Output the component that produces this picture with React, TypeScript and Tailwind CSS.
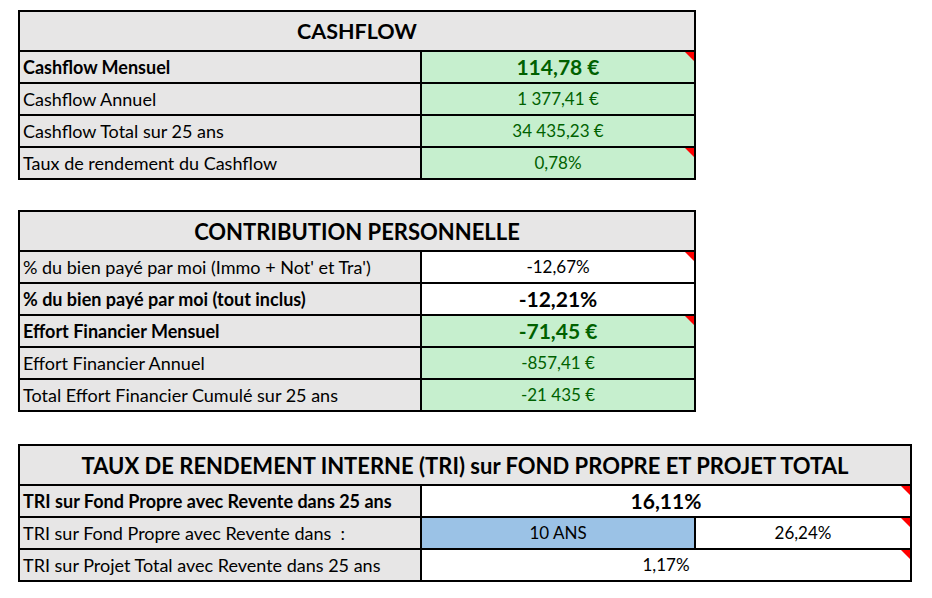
import React from 'react'

type Cell = {
  text: string
  bg?: 'green' | 'white' | 'blue'
  bold?: boolean
  note?: boolean
  width?: string
}

type Row = {
  label: string
  bold?: boolean
  cells: Cell[]
}

const bgClass = {
  green: 'bg-[#c6efce] text-[#006100]',
  white: 'bg-white text-black',
  blue: 'bg-[#9bc2e6] text-black',
}

function Note() {
  return <span className="absolute right-0 top-0 size-[9px] bg-[#ff0000] [clip-path:polygon(0_0,100%_0,100%_100%)]" />
}

function Table({ title, rows, titleSize, width }: { title: string; rows: Row[]; titleSize: string; width: string }) {
  return (
    <div className={`border-2 border-black ${width}`}>
      <div className={`flex h-[40px] items-center justify-center border-b-2 border-black bg-[#e7e6e6] font-bold ${titleSize}`}>
        {title}
      </div>
      {rows.map((row, i) => {
        const last = i === rows.length - 1
        return (
          <div key={i} className={`flex ${last ? 'h-[30px]' : 'h-[32px] border-b-2 border-black'}`}>
            <div className={`flex w-[402px] shrink-0 items-center whitespace-pre border-r-2 border-black bg-[#e7e6e6] pl-[3px] text-[18px] ${row.bold ? 'font-bold' : ''}`}>
              {row.label}
            </div>
            {row.cells.map((cell, j) => (
              <div
                key={j}
                className={`relative flex items-center justify-center ${cell.width ?? 'flex-1'} ${bgClass[cell.bg ?? 'white']} ${
                  cell.bold ? 'text-[21px] font-bold' : 'text-[17px]'
                } ${j < row.cells.length - 1 ? 'border-r-2 border-black' : ''}`}
              >
                {cell.text}
                {cell.note && <Note />}
              </div>
            ))}
          </div>
        )
      })}
    </div>
  )
}

const cashflow: Row[] = [
  { label: 'Cashflow Mensuel', bold: true, cells: [{ text: '114,78 €', bg: 'green', bold: true, note: true }] },
  { label: 'Cashflow Annuel', cells: [{ text: '1 377,41 €', bg: 'green' }] },
  { label: 'Cashflow Total sur 25 ans', cells: [{ text: '34 435,23 €', bg: 'green' }] },
  { label: 'Taux de rendement du Cashflow', cells: [{ text: '0,78%', bg: 'green', note: true }] },
]

const contribution: Row[] = [
  { label: "% du bien payé par moi (Immo + Not' et Tra')", cells: [{ text: '-12,67%', note: true }] },
  { label: '% du bien payé par moi (tout inclus)', bold: true, cells: [{ text: '-12,21%', bold: true }] },
  { label: 'Effort Financier Mensuel', bold: true, cells: [{ text: '-71,45 €', bg: 'green', bold: true, note: true }] },
  { label: 'Effort Financier Annuel', cells: [{ text: '-857,41 €', bg: 'green' }] },
  { label: 'Total Effort Financier Cumulé sur 25 ans', cells: [{ text: '-21 435 €', bg: 'green' }] },
]

const tri: Row[] = [
  { label: 'TRI sur Fond Propre avec Revente dans 25 ans', bold: true, cells: [{ text: '16,11%', bold: true, note: true }] },
  {
    label: 'TRI sur Fond Propre avec Revente dans  :',
    cells: [
      { text: '10 ANS', bg: 'blue', width: 'w-[274px]' },
      { text: '26,24%', note: true },
    ],
  },
  { label: 'TRI sur Projet Total avec Revente dans 25 ans', cells: [{ text: '1,17%', note: true }] },
]

export default function App() {
  return (
    <div className="min-h-[598px] w-[932px] bg-white pl-[18px] pt-[10px] text-black [font-family:Lato,'Liberation_Sans',sans-serif]">
      <div className="flex flex-col">
        <Table title="CASHFLOW" rows={cashflow} titleSize="text-[21.5px]" width="w-[678px]" />
        <div className="pt-[30px]">
          <Table title="CONTRIBUTION PERSONNELLE" rows={contribution} titleSize="text-[22px]" width="w-[678px]" />
        </div>
        <div className="pt-[32px]">
          <Table
            title="TAUX DE RENDEMENT INTERNE (TRI) sur FOND PROPRE ET PROJET TOTAL"
            rows={tri}
            titleSize="text-[22px]"
            width="w-[894px]"
          />
        </div>
      </div>
    </div>
  )
}
